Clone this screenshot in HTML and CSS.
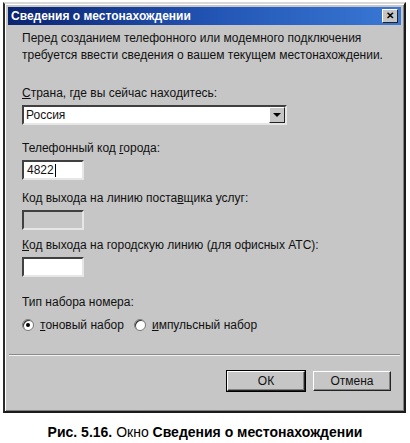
FILE: index.html
```html
<!DOCTYPE html>
<html lang="ru">
<head>
    <meta charset="UTF-8">
    <title>Сведения о местонахождении</title>
    <link rel="stylesheet" href="styles.css">
</head>
<body>
    <div class="dialog">
        <div class="titlebar">
            <span class="title">Сведения о местонахождении</span>
            <span class="close">&#x2715;</span>
        </div>
        <div class="body">
            <p class="intro">Перед созданием телефонного или модемного подключения<br>требуется ввести сведения о вашем текущем местонахождении.</p>

            <label class="lbl"><u>С</u>трана, где вы сейчас находитесь:</label>
            <div class="combo">
                <span class="combo-text">Россия</span>
                <span class="combo-btn"><span class="arrow"></span></span>
            </div>

            <label class="lbl">Телефонный код <u>г</u>орода:</label>
            <div class="field">4822<span class="caret"></span></div>

            <label class="lbl">Код выхода на линию поста<u>в</u>щика услуг:</label>
            <div class="field disabled"></div>

            <label class="lbl"><u>К</u>од выхода на городскую линию (для офисных АТС):</label>
            <div class="field last"></div>

            <label class="lbl">Тип набора номера:</label>
            <div class="radios">
                <span class="radio checked"></span><span class="rlabel"><u>т</u>оновый набор</span>
                <span class="radio"></span><span class="rlabel"><u>и</u>мпульсный набор</span>
            </div>
        </div>
        <div class="sep"></div>
        <div class="buttons">
            <div class="btn default">ОК</div>
            <div class="btn">Отмена</div>
        </div>
    </div>
    <p class="caption"><b>Рис. 5.16.</b> Окно <b>Сведения о местонахождении</b></p>
</body>
</html>
```

FILE: styles.css
```css
* {
    margin: 0;
    padding: 0;
    box-sizing: border-box;
}

body {
    background: #fff;
    font-family: "Liberation Sans", Arial, sans-serif;
    font-size: 12px;
    color: #111;
}

.dialog {
    margin: 2px 4px 0 3px;
    height: 411px;
    background: #c6c6c6;
    border: 2px solid #1a1a1a;
    border-top-color: #d8d8d8;
    border-left-color: #2a2a2a;
    box-shadow: inset 1px 1px 0 #fff, inset -1px -1px 0 #808080;
    padding: 3px 3px 0 3px;
    display: flex;
    flex-direction: column;
}

.titlebar {
    height: 18px;
    background: linear-gradient(to right, #0b2470, #2457b8 55%, #3a78d4);
    display: flex;
    align-items: center;
    justify-content: space-between;
    padding: 0 3px 0 3px;
}

.title {
    color: #fff;
    font-weight: bold;
    font-size: 12px;
}

.close {
    width: 16px;
    height: 14px;
    background: #c6c6c6;
    border: 1px solid #222;
    border-top-color: #fff;
    border-left-color: #fff;
    font-size: 10px;
    font-weight: bold;
    line-height: 12px;
    text-align: center;
    color: #000;
}

.body {
    padding: 5px 0 0 14px;
    flex: 1;
}

.intro {
    line-height: 17px;
    margin-bottom: 21px;
}

.lbl {
    display: block;
    line-height: 16px;
    margin-bottom: 4px;
}

.combo {
    width: 265px;
    height: 20px;
    background: #fff;
    border: 2px solid #404040;
    border-right-color: #e6e6e6;
    border-bottom-color: #e6e6e6;
    display: flex;
    align-items: center;
    justify-content: space-between;
    margin-bottom: 15px;
}

.combo-text {
    padding-left: 2px;
}

.combo-btn {
    width: 16px;
    height: 16px;
    background: #c6c6c6;
    border: 1px solid #222;
    border-top-color: #fff;
    border-left-color: #fff;
    display: flex;
    align-items: center;
    justify-content: center;
}

.arrow {
    width: 0;
    height: 0;
    border-left: 4px solid transparent;
    border-right: 4px solid transparent;
    border-top: 4px solid #000;
}

.field {
    width: 62px;
    height: 20px;
    background: #fff;
    border: 2px solid #404040;
    border-right-color: #e6e6e6;
    border-bottom-color: #e6e6e6;
    padding-left: 3px;
    line-height: 16px;
    margin-bottom: 10px;
    display: flex;
    align-items: center;
}

.field.disabled {
    background: #c6c6c6;
    margin-bottom: 7px;
}

.field.last {
    margin-bottom: 17px;
}

.caret {
    width: 1px;
    height: 13px;
    background: #000;
    margin-left: 1px;
}

.radios {
    display: flex;
    align-items: center;
    margin-top: 8px;
}

.radio {
    width: 12px;
    height: 12px;
    border-radius: 50%;
    background: #fff;
    border: 1px solid #777;
    box-shadow: inset 1px 1px 0 #333;
    margin-right: 6px;
    position: relative;
}

.radio.checked::after {
    content: '';
    position: absolute;
    left: 3px;
    top: 3px;
    width: 4px;
    height: 4px;
    border-radius: 50%;
    background: #000;
}

.rlabel {
    margin-right: 10px;
}

.sep {
    height: 2px;
    border-top: 1px solid #8a8a8a;
    border-bottom: 1px solid #f2f2f2;
    margin: 0 1px 15px 1px;
}

.buttons {
    display: flex;
    justify-content: flex-end;
    gap: 8px;
    padding: 0 10px 20px 0;
}

.btn {
    width: 78px;
    height: 20px;
    border: 1px solid #222;
    border-top-color: #fff;
    border-left-color: #fff;
    box-shadow: inset -1px -1px 0 #808080;
    text-align: center;
    line-height: 18px;
}

.btn.default {
    outline: 1px solid #000;
}

.caption {
    text-align: center;
    font-size: 14px;
    margin-top: 11px;
    color: #000;
}
```
